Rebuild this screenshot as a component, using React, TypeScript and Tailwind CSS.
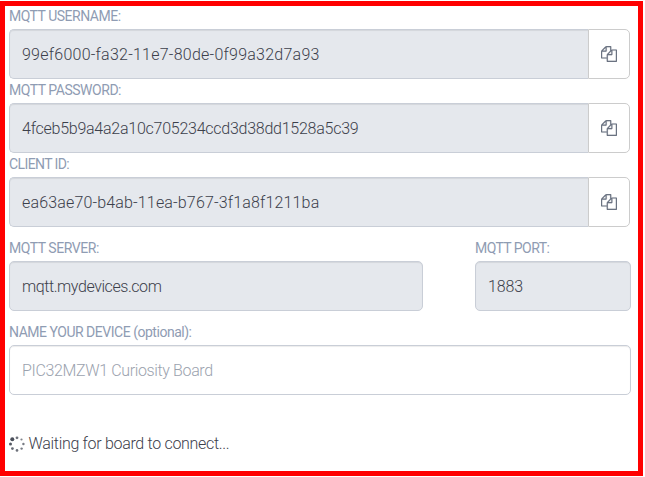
import type { ReactNode } from "react";

function CopyIcon() {
  return (
    <svg
      viewBox="0 0 1792 1792"
      className="size-4 fill-[#6b7382] stroke-[#6b7382] stroke-[16]"
      aria-hidden="true"
    >
      <path d="M1696 384q40 0 68 28t28 68v1216q0 40-28 68t-68 28h-960q-40 0-68-28t-28-68v-288h-544q-40 0-68-28t-28-68v-672q0-40 20-88t48-76l408-408q28-28 76-48t88-20h416q40 0 68 28t28 68v328q68-40 128-40h416zm-544 213l-299 299h299v-299zm-640-384l-299 299h299v-299zm196 647l316-316v-416h-384v416q0 40-28 68t-68 28h-416v640h512v-256q0-40 20-88t48-76zm956 804v-1152h-384v416q0 40-28 68t-68 28h-416v640h896z" />
    </svg>
  );
}

function Spinner() {
  return (
    <svg viewBox="0 0 16 16" className="size-4 fill-[#4a4f5a]" aria-hidden="true">
      <circle cx="3.3" cy="3.3" r="2" />
      <circle cx="8" cy="1.8" r="1.4" opacity=".8" />
      <circle cx="12.5" cy="3.5" r="1.1" opacity=".7" />
      <circle cx="14.4" cy="8" r="1.2" opacity=".75" />
      <circle cx="12.6" cy="12.6" r="1.2" opacity=".75" />
      <circle cx="8" cy="14.4" r="1.3" opacity=".8" />
      <circle cx="3.4" cy="12.6" r="1.4" opacity=".85" />
      <circle cx="1.5" cy="8" r="1.5" opacity=".95" />
    </svg>
  );
}

function Label({ children, className }: { children: ReactNode; className: string }) {
  return (
    <div
      className={`h-6 whitespace-nowrap pt-0.5 text-[14px] font-normal leading-[18px] text-[#8f9cb3] ${className}`}
    >
      {children}
    </div>
  );
}

const box =
  "flex h-[50px] items-center whitespace-nowrap border border-[#c9ced7] px-3 pt-px text-base shadow-[inset_0_1px_1px_rgba(0,0,0,0.075)]";

function CopyField({
  label,
  value,
  labelClass,
  valueClass,
}: {
  label: string;
  value: string;
  labelClass: string;
  valueClass: string;
}) {
  return (
    <div>
      <Label className={labelClass}>{label}</Label>
      <div className="flex w-[621px]">
        <div className={`${box} w-[579px] rounded-l-[5px] border-r-0 bg-[#e5e8ed] ${valueClass}`}>{value}</div>
        <button
          aria-label={`Copy ${label}`}
          className="flex h-[50px] w-[42px] items-center justify-center rounded-r-[5px] border border-[#cccccc] bg-white"
        >
          <CopyIcon />
        </button>
      </div>
    </div>
  );
}

export default function App() {
  return (
    <div className="h-[477px] w-[645px] bg-white pt-px font-['Roboto','Liberation_Sans',sans-serif] font-light text-[#3c404b]">
      <div className="h-[475px] w-[643px] border-5 border-[#ff0000] pl-1">
        <CopyField
          label="MQTT USERNAME:"
          value="99ef6000-fa32-11e7-80de-0f99a32d7a93"
          labelClass="-mt-px tracking-[-0.48px]"
          valueClass="tracking-[0.24px]"
        />
        <CopyField
          label="MQTT PASSWORD:"
          value="4fceb5b9a4a2a10c705234ccd3d38dd1528a5c39"
          labelClass="tracking-[-0.46px]"
          valueClass="tracking-[-0.25px]"
        />
        <CopyField
          label="CLIENT ID:"
          value="ea63ae70-b4ab-11ea-b767-3f1a8f1211ba"
          labelClass="tracking-[-0.6px]"
          valueClass="tracking-[0.16px]"
        />
        <div className="mt-2.5 flex gap-[52px]">
          <div className="w-[414px]">
            <Label className="tracking-[-0.45px]">MQTT SERVER:</Label>
            <div className={`${box} rounded-[5px] bg-[#e5e8ed] tracking-[-0.43px]`}>mqtt.mydevices.com</div>
          </div>
          <div className="w-[156px]">
            <Label className="tracking-[-0.55px]">MQTT PORT:</Label>
            <div className={`${box} rounded-[5px] bg-[#e5e8ed] tracking-[-0.1px]`}>1883</div>
          </div>
        </div>
        <div className="mt-2.5 w-[622px]">
          <Label className="tracking-[-0.48px]">NAME YOUR DEVICE (optional):</Label>
          <div className={`${box} rounded-[5px] bg-white text-[#9ba2ae] tracking-[-0.36px]`}>
            PIC32MZW1 Curiosity Board
          </div>
        </div>
        <div className="mt-[37px] flex h-6 items-center gap-[3.5px] text-base">
          <Spinner />
          <span className="tracking-[-0.31px]">Waiting for board to connect...</span>
        </div>
      </div>
    </div>
  );
}
